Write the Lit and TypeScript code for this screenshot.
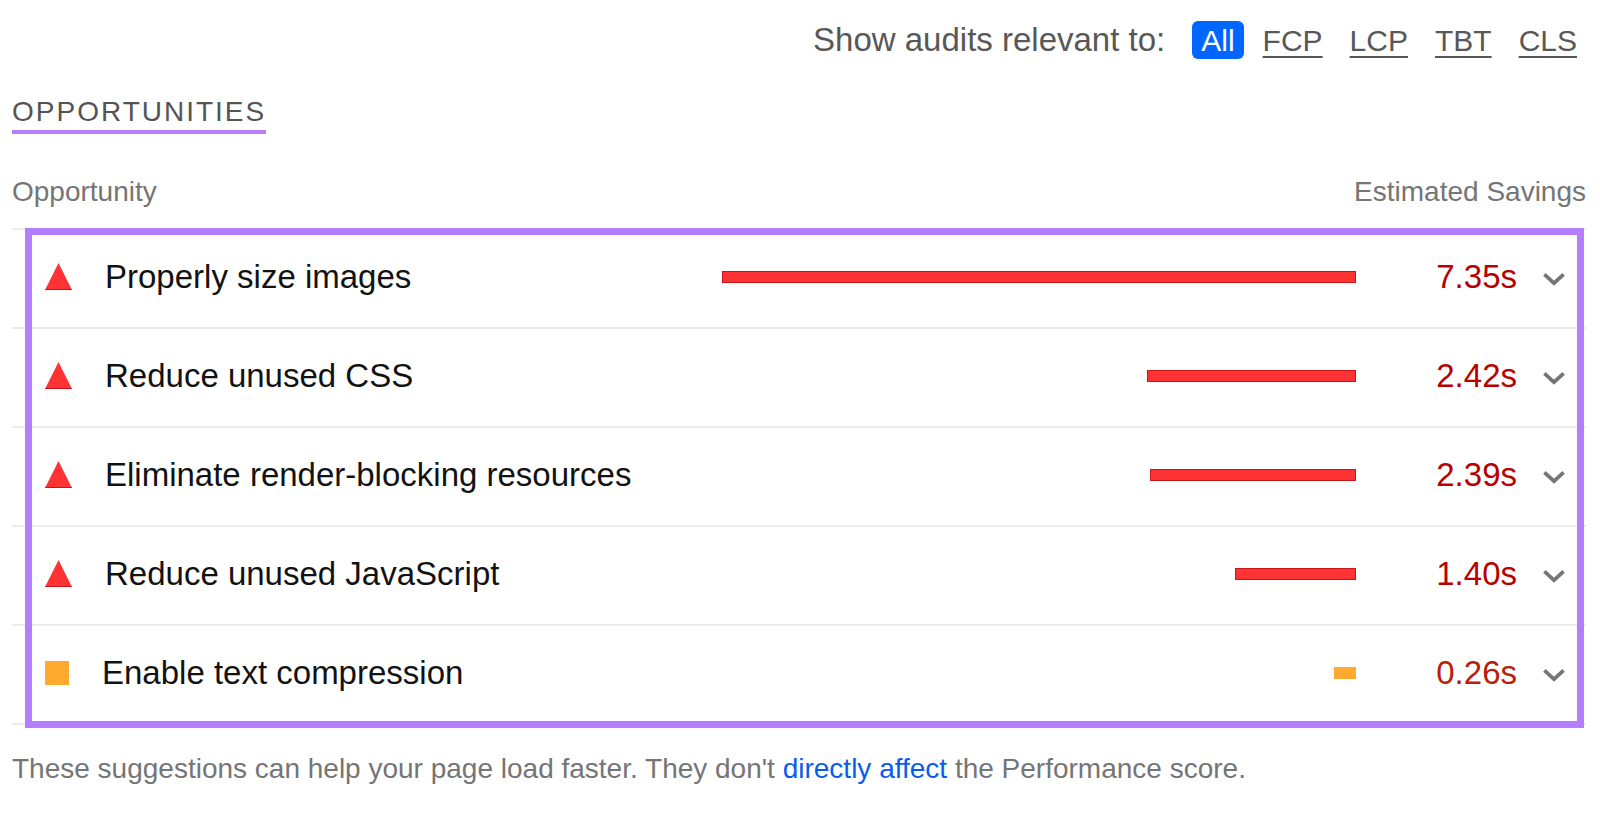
import { LitElement, html, svg, css } from "lit";
import { customElement, state } from "lit/decorators.js";
import { classMap } from "lit/directives/class-map.js";

type Severity = "fail" | "average";

interface Audit {
  title: string;
  seconds: number;
  severity: Severity;
}

// Savings, in seconds, that a bar filling its whole column stands for.
const SCALE_SECONDS = 7.48;

const FILTERS = ["All", "FCP", "LCP", "TBT", "CLS"];

const AUDITS: Audit[] = [
  { title: "Properly size images", seconds: 7.35, severity: "fail" },
  { title: "Reduce unused CSS", seconds: 2.42, severity: "fail" },
  { title: "Eliminate render-blocking resources", seconds: 2.39, severity: "fail" },
  { title: "Reduce unused JavaScript", seconds: 1.4, severity: "fail" },
  { title: "Enable text compression", seconds: 0.26, severity: "average" },
];

@customElement("audit-filter")
export class AuditFilter extends LitElement {
  static styles = css`
    :host {
      display: block;
    }
    .filter {
      display: flex;
      flex-wrap: wrap;
      justify-content: flex-end;
      align-items: baseline;
      color: #585858;
      font-size: 33px;
      line-height: 38px;
    }
    .options {
      display: flex;
      align-items: baseline;
      gap: 27px;
      margin-left: 27px;
      font-size: 30px;
    }
    .option {
      color: #585858;
      text-decoration: underline;
      text-decoration-thickness: 2px;
      text-underline-offset: 5px;
    }
    .selected {
      margin-right: -8px;
      padding: 2px 9px 0;
      border-radius: 6px;
      background: #0066ff;
      color: #ffffff;
      line-height: 36px;
      text-decoration: none;
    }
  `;

  @state() private selected = "All";

  private pick(event: Event, name: string) {
    event.preventDefault();
    this.selected = name;
  }

  render() {
    return html`
      <nav class="filter" aria-label="Audit filter">
        <span>Show audits relevant to:</span>
        <div class="options">
          ${FILTERS.map(
            (name) => html`<a
              href="#${name}"
              class=${classMap({ option: true, selected: name === this.selected })}
              @click=${(e: Event) => this.pick(e, name)}
              >${name}</a
            >`
          )}
        </div>
      </nav>
    `;
  }
}

@customElement("audit-table")
export class AuditTable extends LitElement {
  static styles = css`
    :host {
      display: block;
    }
    .table {
      width: 100%;
      table-layout: fixed;
      border-collapse: separate;
      border-spacing: 0;
    }
    .bar-col {
      width: 41%;
    }
    .value-col {
      width: 161px;
    }
    .toggle-col {
      width: 69px;
    }
    .head {
      padding: 42px 0 20px;
      border-bottom: 2px solid #ebebeb;
      color: #757575;
      font-size: 28px;
      font-weight: 400;
      line-height: 32px;
      text-align: left;
    }
    .head-savings {
      text-align: right;
    }
    .body {
      position: relative;
    }
    /* Highlight frame drawn over the rows. */
    .body::after {
      content: "";
      position: absolute;
      inset: -2px 2px -3px 13px;
      border: 7px solid #b57eff;
      pointer-events: none;
    }
    .cell {
      height: 93px;
      padding: 0 0 4px;
      border-bottom: 2px solid #ebebeb;
      font-size: 33px;
      line-height: 38px;
      vertical-align: middle;
    }
    .label {
      display: flex;
      align-items: center;
      gap: 33px;
      padding-left: 33px;
      color: #121212;
      white-space: nowrap;
    }
    .icon {
      display: block;
      flex: none;
    }
    .bar {
      box-sizing: border-box;
      height: 12px;
      margin-left: auto;
    }
    .bar.fail {
      border: 1px solid #c7161b;
      background: #ff3333;
    }
    .bar.average {
      background: #ffa931;
    }
    .value {
      text-align: right;
    }
    .value.fail {
      color: #b80000;
    }
    .value.average {
      color: #b82008;
    }
    .toggle {
      display: block;
      margin: 0 0 0 auto;
      padding: 10px 21px 4px;
      border: 0;
      background: none;
      color: #757575;
      cursor: pointer;
    }
  `;

  private icon(severity: Severity) {
    return severity === "fail"
      ? html`<svg class="icon" width="27" height="27" viewBox="0 0 27 27" aria-hidden="true">
          ${svg`<path d="M13.5 0 27 27H0Z" fill="#ff3333" /><path d="M.5 26h26l.5 1H0Z" fill="#c7161b" />`}
        </svg>`
      : html`<svg class="icon" width="24" height="24" viewBox="0 0 24 24" aria-hidden="true">
          ${svg`<path d="M0 0h24v24H0Z" fill="#ffa931" />`}
        </svg>`;
  }

  render() {
    return html`
      <table class="table">
        <colgroup>
          <col />
          <col class="bar-col" />
          <col class="value-col" />
          <col class="toggle-col" />
        </colgroup>
        <thead>
          <tr>
            <th class="head" scope="col">Opportunity</th>
            <th class="head head-savings" scope="colgroup" colspan="3">Estimated Savings</th>
          </tr>
        </thead>
        <tbody class="body">
          ${AUDITS.map(
            (audit) => html`
              <tr>
                <td class="cell">
                  <div class="label">${this.icon(audit.severity)}<span>${audit.title}</span></div>
                </td>
                <td class="cell">
                  <div
                    class="bar ${audit.severity}"
                    style="width: ${(audit.seconds / SCALE_SECONDS) * 100}%"
                  ></div>
                </td>
                <td class="cell value ${audit.severity}">${audit.seconds.toFixed(2)}s</td>
                <td class="cell">
                  <button class="toggle" type="button" aria-label="Show details: ${audit.title}">
                    <svg class="icon" width="22" height="13" viewBox="0 0 22 13" aria-hidden="true">
                      <path d="M1.4 1.4 11 10.2 20.6 1.4" fill="none" stroke="currentColor" stroke-width="3.6" />
                    </svg>
                  </button>
                </td>
              </tr>
            `
          )}
        </tbody>
      </table>
    `;
  }
}

@customElement("app-root")
export class AppRoot extends LitElement {
  static styles = css`
    :host {
      display: block;
      box-sizing: border-box;
      min-height: 100vh;
      background: #ffffff;
      font-family: "Liberation Sans", Arial, sans-serif;
    }
    .page {
      padding: 21px 14px 40px 12px;
    }
    .filters {
      padding-right: 9px;
    }
    .title {
      width: fit-content;
      margin: 36px 0 0;
      padding-bottom: 2px;
      border-bottom: 4px solid #b57eff;
      color: #545454;
      font-size: 28px;
      font-weight: 400;
      line-height: 32px;
      letter-spacing: 2px;
      text-transform: uppercase;
    }
    .note {
      margin: 28px 0 0;
      color: #757575;
      font-size: 28px;
      line-height: 32px;
    }
    .link {
      color: #0a5cf0;
      text-decoration: none;
    }
  `;

  render() {
    return html`
      <main class="page">
        <audit-filter class="filters"></audit-filter>
        <h2 class="title">Opportunities</h2>
        <audit-table></audit-table>
        <p class="note">
          These suggestions can help your page load faster. They don't
          <a class="link" href="#performance-score">directly affect</a> the Performance score.
        </p>
      </main>
    `;
  }
}
